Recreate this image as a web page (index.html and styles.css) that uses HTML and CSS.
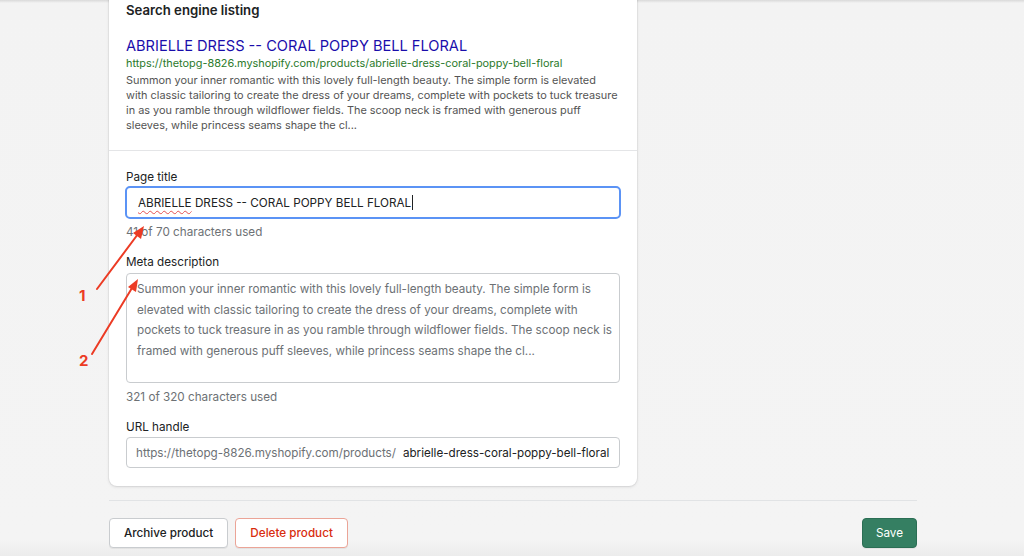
FILE: index.html
```html
<!DOCTYPE html>
<html lang="en">
<head>
<meta charset="utf-8">
<title>Search engine listing</title>
<link rel="stylesheet" href="styles.css">
</head>
<body>
<div class="page">
  <div class="card">
    <section class="card-section preview">
      <h2 class="card-title">Search engine listing</h2>
      <div class="serp">
        <div class="serp-title">ABRIELLE DRESS -- CORAL POPPY BELL FLORAL</div>
        <div class="serp-url">https://thetopg-8826.myshopify.com/products/abrielle-dress-coral-poppy-bell-floral</div>
        <p class="serp-desc">Summon your inner romantic with this lovely full-length beauty. The simple form is elevated<br>with classic tailoring to create the dress of your dreams, complete with pockets to tuck treasure<br>in as you ramble through wildflower fields. The scoop neck is framed with generous puff<br>sleeves, while princess seams shape the cl...</p>
      </div>
    </section>
    <section class="card-section fields">
      <div class="field">
        <label class="label">Page title</label>
        <div class="input focused"><span class="typed"><span class="misspelled">ABRIELLE</span> DRESS -- CORAL POPPY BELL FLORAL</span><span class="caret"></span></div>
        <div class="help">41 of 70 characters used</div>
      </div>
      <div class="field">
        <label class="label">Meta description</label>
        <div class="textarea">Summon your inner romantic with this lovely full-length beauty. The simple form is<br>elevated with classic tailoring to create the dress of your dreams, complete with<br>pockets to tuck treasure in as you ramble through wildflower fields. The scoop neck is<br>framed with generous puff sleeves, while princess seams shape the cl...</div>
        <div class="help after-area">321 of 320 characters used</div>
      </div>
      <div class="field">
        <label class="label">URL handle</label>
        <div class="input url"><span class="prefix">https://thetopg-8826.myshopify.com/products/</span><span class="value">abrielle-dress-coral-poppy-bell-floral</span></div>
      </div>
    </section>
  </div>
  <div class="divider"></div>
  <div class="actions">
    <div class="left-actions">
      <button class="btn">Archive product</button>
      <button class="btn danger">Delete product</button>
    </div>
    <button class="btn primary">Save</button>
  </div>
</div>
<svg class="annotations" width="1024" height="556" viewBox="0 0 1024 556">
  <g stroke="#ec3b24" stroke-width="2" stroke-linecap="round" fill="none">
    <line x1="97" y1="289" x2="138" y2="234"/>
    <line x1="92" y1="354" x2="132" y2="288"/>
  </g>
  <g fill="#ec3b24">
    <polygon points="144,226 141,239 133,233"/>
    <polygon points="138,279 136,292 128,287"/>
    <text x="79" y="301" class="num">1</text>
    <text x="79" y="366" class="num">2</text>
  </g>
</svg>
</body>
</html>
```

FILE: styles.css
```css
html, body {
  margin: 0;
  padding: 0;
}
body {
  width: 1024px;
  height: 556px;
  overflow: hidden;
  position: relative;
  background: linear-gradient(to bottom, #d9d9d9 0, #f3f3f3 3px, #f4f4f4 540px, #ececec 556px);
  font-family: Inter, "Noto Sans", sans-serif;
  color: #202223;
}
.page {
  width: 808px;
  margin-left: 109px;
  display: flex;
  flex-direction: column;
}
.card {
  width: 528px;
  margin-top: -16px;
  background: #fff;
  border-radius: 8px;
  box-shadow: 0 0 0 1px rgba(63,63,68,0.05), 0 1px 3px rgba(63,63,68,0.15);
}
.card-section {
  padding: 0 17px;
}
.preview {
  padding-top: 16px;
  padding-bottom: 17px;
  border-bottom: 1px solid #e4e5e7;
}
.card-title {
  margin: 0;
  font-size: 13.2px;
  font-weight: 600;
  line-height: 20px;
  color: #202223;
}
.serp {
  margin-top: 16px;
}
.serp-title {
  font-size: 14.6px;
  line-height: 20px;
  color: #1a0dab;
}
.serp-url {
  font-size: 10.9px;
  line-height: 14px;
  color: #2b7a2b;
}
.serp-desc {
  margin: 3px 0 0;
  font-size: 10.9px;
  line-height: 15px;
  color: #545454;
  white-space: nowrap;
}
.fields {
  padding-top: 18px;
  padding-bottom: 18px;
  display: flex;
  flex-direction: column;
  gap: 14px;
}
.field {
  display: flex;
  flex-direction: column;
}
.label {
  font-size: 11.7px;
  line-height: 16px;
  margin-bottom: 1px;
  color: #202223;
}
.input {
  height: 31px;
  box-sizing: border-box;
  border: 1px solid #c9cccf;
  border-radius: 4px;
  display: flex;
  align-items: center;
  padding: 0 10px;
  font-size: 11.7px;
  white-space: nowrap;
}
.input.focused {
  height: 33px;
  margin-left: -1px;
  margin-right: -1px;
  border: 2px solid #5b93f5;
  border-radius: 5px;
  padding-left: 11px;
}
.typed {
  color: #202223;
}
.misspelled {
  text-decoration: underline wavy #e55050 1px;
  text-decoration-skip-ink: none;
  text-underline-offset: 3px;
}
.caret {
  width: 1px;
  height: 15px;
  background: #202223;
  margin-left: 1px;
}
.help {
  font-size: 11.7px;
  line-height: 16px;
  margin-top: 5px;
  color: #6d7175;
}
.help.after-area {
  margin-top: 6px;
}
.textarea {
  height: 110px;
  margin-top: 2px;
  box-sizing: border-box;
  border: 1px solid #c9cccf;
  border-radius: 4px;
  padding: 5px 10px;
  font-size: 11.7px;
  line-height: 20.6px;
  color: #6d7175;
  white-space: nowrap;
}
.url {
  margin-top: 1px;
  gap: 7px;
  padding: 0 10px 0 9px;
  font-size: 11.65px;
}
.prefix {
  color: #6d7175;
}
.value {
  color: #202223;
}
.divider {
  height: 1px;
  background: #e1e3e5;
  margin-top: 14px;
}
.actions {
  margin-top: 17px;
  display: flex;
  justify-content: space-between;
  align-items: center;
}
.left-actions {
  display: flex;
  gap: 7px;
}
.btn {
  height: 30px;
  box-sizing: border-box;
  padding: 0 14px;
  font-family: inherit;
  font-size: 11.7px;
  font-weight: 500;
  border-radius: 4px;
  border: 1px solid #c9cccf;
  background: #fff;
  color: #202223;
  box-shadow: 0 1px 0 rgba(0,0,0,0.05);
}
.btn.danger {
  color: #d82c0d;
  border-color: #eba497;
  padding: 0 14px;
}
.btn.primary {
  background: #357f62;
  border-color: #2b6e54;
  color: #fff;
  padding: 0 13px;
  font-weight: 400;
}
.annotations {
  position: absolute;
  left: 0;
  top: 0;
  pointer-events: none;
}
.num {
  font-family: Inter, "Noto Sans", sans-serif;
  font-weight: 700;
  font-size: 15px;
}
```
